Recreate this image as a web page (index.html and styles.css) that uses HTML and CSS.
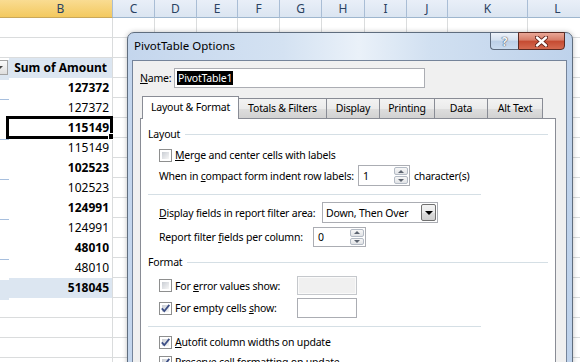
FILE: index.html
```html
<!DOCTYPE html>
<html lang="en">
<head>
    <meta charset="UTF-8">
    <meta name="viewport" content="width=device-width, initial-scale=1.0">
    <title>PivotTable Options</title>
    <link rel="stylesheet" href="styles.css">
</head>
<body>
    <!-- Worksheet behind the dialog -->
    <div class="sheet">
        <div class="col col-a">
            <div class="ch ch-active"></div>
            <div class="cell"></div>
            <div class="cell"></div>
            <div class="cell pv pv-head"><span class="filter-btn"></span></div>
            <div class="cell pv group"></div>
            <div class="cell pv"></div>
            <div class="cell pv group"></div>
            <div class="cell pv"></div>
            <div class="cell pv group"></div>
            <div class="cell pv"></div>
            <div class="cell pv group"></div>
            <div class="cell pv"></div>
            <div class="cell pv group"></div>
            <div class="cell pv"></div>
            <div class="cell pv pv-total"></div>
        </div>
        <div class="col col-b">
            <div class="ch ch-active">B</div>
            <div class="cell"></div>
            <div class="cell"></div>
            <div class="cell pv pv-head">Sum of Amount</div>
            <div class="cell pv strong">127372</div>
            <div class="cell pv">127372</div>
            <div class="cell pv strong">115149</div>
            <div class="cell pv">115149</div>
            <div class="cell pv strong">102523</div>
            <div class="cell pv">102523</div>
            <div class="cell pv strong">124991</div>
            <div class="cell pv">124991</div>
            <div class="cell pv strong">48010</div>
            <div class="cell pv">48010</div>
            <div class="cell pv pv-total">518045</div>
            <div class="sel-box"></div>
            <div class="fill-handle"></div>
        </div>
        <div class="col"><div class="ch">C</div></div>
        <div class="col"><div class="ch">D</div></div>
        <div class="col col-e"><div class="ch">E</div></div>
        <div class="col"><div class="ch">F</div></div>
        <div class="col"><div class="ch">G</div></div>
        <div class="col col-h"><div class="ch">H</div></div>
        <div class="col"><div class="ch">I</div></div>
        <div class="col col-j"><div class="ch">J</div></div>
        <div class="col col-k"><div class="ch">K</div></div>
        <div class="col col-l"><div class="ch">L</div></div>
    </div>

    <!-- PivotTable Options dialog -->
    <div class="dialog">
        <div class="titlebar">
            <span class="title">PivotTable Options</span>
            <div class="caption-btns">
                <span class="btn-help">?</span>
                <span class="btn-close">
                    <svg width="13" height="11" viewBox="0 0 13 11">
                        <path d="M2 1.5 L11 9.5 M11 1.5 L2 9.5" stroke="#5a1d14" stroke-width="4.2" stroke-linecap="round"/>
                        <path d="M2 1.5 L11 9.5 M11 1.5 L2 9.5" stroke="#ffffff" stroke-width="2.4" stroke-linecap="round"/>
                    </svg>
                </span>
            </div>
        </div>

        <div class="client">
            <div class="name-row">
                <span class="name-label"><u>N</u>ame:</span>
                <div class="textbox name-box"><span class="selected">PivotTable1</span></div>
            </div>

            <div class="tabs">
                <div class="tab active">Layout &amp; Format</div>
                <div class="tab tab-totals">Totals &amp; Filters</div>
                <div class="tab tab-display">Display</div>
                <div class="tab tab-printing">Printing</div>
                <div class="tab tab-data">Data</div>
                <div class="tab tab-alt">Alt Text</div>
            </div>

            <div class="panel">
                <div class="group-title">Layout</div>
                <div class="row check-row merge-row">
                    <span class="check"></span>
                    <span class="lbl"><u>M</u>erge and center cells with labels</span>
                </div>
                <div class="row compact-row">
                    <span class="lbl lbl-compact">When in <u>c</u>ompact form indent row labels:</span>
                    <div class="textbox spin spin-indent">
                        <span class="val">1</span>
                        <span class="spin-btns"><span class="up"></span><span class="down"></span></span>
                    </div>
                    <span class="unit">character(s)</span>
                </div>
                <div class="sep"></div>
                <div class="row select-row">
                    <span class="lbl lbl-display"><u>D</u>isplay fields in report filter area:</span>
                    <div class="textbox dropdown">
                        <span class="val">Down, Then Over</span>
                        <span class="drop-btn"></span>
                    </div>
                </div>
                <div class="row report-row">
                    <span class="lbl lbl-report">Report filter <u>f</u>ields per column:</span>
                    <div class="textbox spin spin-cols">
                        <span class="val">0</span>
                        <span class="spin-btns"><span class="up"></span><span class="down"></span></span>
                    </div>
                </div>

                <div class="group-title format-title">Format</div>
                <div class="row check-row error-row">
                    <span class="check"></span>
                    <span class="lbl fixed">For <u>e</u>rror values show:</span>
                    <div class="textbox small disabled"></div>
                </div>
                <div class="row check-row empty-row">
                    <span class="check checked"><svg width="9" height="9" viewBox="0 0 9 9"><path d="M0.8 4.3 L3.3 7.2 L8.3 0.9" fill="none" stroke="#3d4f86" stroke-width="1.8"/></svg></span>
                    <span class="lbl fixed">For empty cells <u>s</u>how:</span>
                    <div class="textbox small"></div>
                </div>
                <div class="sep"></div>
                <div class="row check-row autofit-row">
                    <span class="check checked"><svg width="9" height="9" viewBox="0 0 9 9"><path d="M0.8 4.3 L3.3 7.2 L8.3 0.9" fill="none" stroke="#3d4f86" stroke-width="1.8"/></svg></span>
                    <span class="lbl"><u>A</u>utofit column widths on update</span>
                </div>
                <div class="row check-row">
                    <span class="check checked"><svg width="9" height="9" viewBox="0 0 9 9"><path d="M0.8 4.3 L3.3 7.2 L8.3 0.9" fill="none" stroke="#3d4f86" stroke-width="1.8"/></svg></span>
                    <span class="lbl"><u>P</u>reserve cell formatting on update</span>
                </div>
            </div>
        </div>
    </div>
</body>
</html>
```

FILE: styles.css
```css
/* General */
* {
    margin: 0;
    padding: 0;
    box-sizing: border-box;
}

body {
    width: 580px;
    height: 362px;
    overflow: hidden;
    position: relative;
    background: #fff;
    font-family: 'Noto Sans', sans-serif;
}

/* Worksheet */
.sheet {
    display: flex;
    height: 362px;
}

.col {
    flex: none;
    position: relative;
    width: 42px;
    height: 100%;
    border-right: 1px solid #dadcdd;
    background: repeating-linear-gradient(to bottom, #fff 0 19px, #dadcdd 19px 20px);
    background-position: 0 18px;
}

.col-a { width: 9px; border-right: 0; }
.col-b { width: 104px; }
.col-e, .col-j { width: 41px; }
.col-h { width: 43px; }
.col-k { width: 80px; }
.col-l { width: 60px; }

.ch {
    height: 18px;
    margin-right: -1px;
    border-right: 1px solid #a9bdd5;
    border-bottom: 1px solid #9eb6ce;
    background: linear-gradient(#e9eff8, #dbe5f1);
    color: #2a4262;
    font-size: 12px;
    line-height: 17px;
    text-align: center;
}

.ch-active {
    background: linear-gradient(#f9dc92, #f3c95f);
    border-bottom-color: #c9a85a;
}

.col-a .ch-active { border-right: 0; margin-right: 0; }

.cell {
    height: 20px;
    padding-right: 3px;
    font-size: 12px;
    line-height: 20px;
    text-align: right;
    color: #000;
}

.pv { background: #fff; }
.pv.strong { font-weight: bold; }
.pv.group { border-bottom: 1px solid #a7bfde; }

.pv-head,
.pv-total {
    background: #dce6f1;
    font-weight: bold;
}

.pv-head { padding-right: 5px; }

.filter-btn {
    display: block;
    width: 15px;
    height: 15px;
    margin: 2px 0 0 -7px;
    border: 1px solid #a3a3a3;
    background: linear-gradient(#fbfbfb, #dedede);
    position: relative;
}

.filter-btn::after {
    content: '';
    position: absolute;
    left: 3px;
    top: 5px;
    border-left: 3px solid transparent;
    border-right: 3px solid transparent;
    border-top: 3px solid #444;
}

.sel-box {
    position: absolute;
    left: -3px;
    top: 116px;
    width: 107px;
    height: 23px;
    border: 3px solid #000;
}

.fill-handle {
    position: absolute;
    left: 99px;
    top: 133px;
    width: 7px;
    height: 7px;
    background: #000;
    border: 1px solid #fff;
}

/* Dialog window */
.dialog {
    position: absolute;
    left: 127px;
    top: 32px;
    width: 446px;
    height: 345px;
    display: flex;
    flex-direction: column;
    padding: 0 5px 0 4px;
    border: 1px solid #5f6d7e;
    border-radius: 7px 7px 0 0;
    background: linear-gradient(90deg, #c4d6ed 0%, #d4e2f2 35%, #eaf1f9 52%, #d1e0f1 68%, #bed2eb 100%);
    box-shadow: 0 0 5px rgba(0, 0, 0, 0.25);
    font-size: 10.5px;
    letter-spacing: -0.2px;
    color: #000;
}

.titlebar {
    flex: none;
    height: 27px;
    display: flex;
    align-items: flex-start;
}

.title {
    padding: 5px 0 0 2px;
    font-size: 11.5px;
    line-height: 16px;
    letter-spacing: 0;
}

.caption-btns {
    display: flex;
    margin: -1px 2px 0 auto;
}

.btn-help {
    width: 28px;
    height: 18px;
    border: 1px solid #5e6b7d;
    border-right: 0;
    border-radius: 0 0 0 4px;
    background: linear-gradient(#edf2f9, #d5e1ef 45%, #bccfe6 50%, #cbdcef);
    display: flex;
    align-items: center;
    justify-content: center;
    font-size: 12px;
    font-weight: bold;
    color: #f4f7fb;
    text-shadow: 0 0 1px #2d3a4c, 0 0 1px #2d3a4c;
}

.btn-close {
    width: 47px;
    height: 18px;
    border: 1px solid #5b2a22;
    border-radius: 0 0 4px 0;
    background: linear-gradient(#e9a797, #d67c67 45%, #c44a31 50%, #d46a50);
    display: flex;
    align-items: center;
    justify-content: center;
}

.client {
    flex: 1;
    display: flex;
    flex-direction: column;
    background: #f0f0f0;
    border: 1px solid #75849a;
    border-bottom: 0;
    padding-top: 7px;
}

.name-row {
    display: flex;
    align-items: center;
    height: 20px;
    padding-left: 7px;
}

.name-label { width: 34px; }

.textbox {
    height: 20px;
    border: 1px solid #abadb3;
    background: #fff;
    display: flex;
    align-items: center;
}

.name-box {
    width: 251px;
    padding-left: 2px;
}

.selected {
    background: #000;
    color: #fff;
    line-height: 14px;
    padding: 0 1px;
}

/* Tabs */
.tabs {
    display: flex;
    align-items: flex-end;
    height: 22px;
    margin-top: 8px;
    padding-left: 9px;
}

.tab {
    height: 20px;
    border: 1px solid #898c95;
    border-left: 0;
    border-bottom: 0;
    background: linear-gradient(#f3f3f3, #ebebeb 50%, #dedede 51%, #d2d2d2);
    line-height: 19px;
    text-align: center;
}

.tab.active {
    position: relative;
    width: 97px;
    height: 23px;
    margin-bottom: -1px;
    border-left: 1px solid #898c95;
    background: #fff;
    line-height: 21px;
}

.tab-totals { width: 88px; }
.tab-display { width: 53px; }
.tab-printing { width: 55px; }
.tab-data { width: 53px; }
.tab-alt { width: 55px; }

.panel {
    flex: 1;
    width: 416px;
    margin-left: 7px;
    padding: 7px 7px 0;
    background: #fff;
    border: 1px solid #898c95;
}

/* Panel rows */
.group-title {
    height: 16px;
    display: flex;
    align-items: center;
}

.group-title::after {
    content: '';
    flex: 1;
    height: 1px;
    margin-left: 5px;
    background: #d5dfe5;
}

.format-title { margin-top: 7px; }

.sep {
    width: 333px;
    height: 1px;
    margin-top: 8px;
    background: #d5dfe5;
}

.row {
    display: flex;
    align-items: center;
    height: 20px;
    padding-left: 11px;
}

.merge-row { margin-top: 3px; }
.compact-row { height: 21px; }
.select-row { height: 21px; margin-top: 7px; }
.report-row { margin-top: 4px; }
.error-row { height: 19px; margin-top: 6px; }
.empty-row { margin-top: 3px; }
.autofit-row { margin-top: 5px; }

.lbl { white-space: nowrap; }
.lbl-compact { width: 195px; }
.lbl-display { width: 160px; }
.lbl-report { width: 150px; }

.check {
    flex: none;
    width: 13px;
    height: 13px;
    padding: 2px;
    border: 1px solid #8e8f8f;
    background: linear-gradient(135deg, #c9cdd3, #f7f7f7) content-box, #fff;
    display: flex;
}

.check svg { margin: -1px; overflow: visible; }

.check-row .lbl { margin-left: 3px; }
.lbl.fixed { width: 122px; }

.spin {
    justify-content: space-between;
    padding-left: 4px;
    margin-left: 4px;
}

.spin-indent { width: 52px; height: 21px; }
.spin-cols { width: 53px; }

.spin-btns {
    display: flex;
    flex-direction: column;
    gap: 1px;
    width: 15px;
    height: 100%;
    padding: 1px 1px 1px 0;
}

.spin-btns span {
    flex: 1;
    border: 1px solid #b3bac4;
    border-radius: 2px;
    background: linear-gradient(#f7f7f7, #e1e3e6);
    display: flex;
    align-items: center;
    justify-content: center;
}

.spin-btns .up::after {
    content: '';
    border-left: 3px solid transparent;
    border-right: 3px solid transparent;
    border-bottom: 3px solid #5c6470;
}

.spin-btns .down::after {
    content: '';
    border-left: 3px solid transparent;
    border-right: 3px solid transparent;
    border-top: 3px solid #5c6470;
}

.unit { margin-left: 4px; }

.dropdown {
    width: 116px;
    height: 21px;
    margin-left: 3px;
    padding: 0 1px 0 3px;
    justify-content: space-between;
}

.drop-btn {
    width: 15px;
    height: 17px;
    border: 1px solid #707070;
    border-radius: 2px;
    background: linear-gradient(#f3f3f3, #ebebeb 50%, #dddddd 51%, #cfcfcf);
    display: flex;
    align-items: center;
    justify-content: center;
}

.drop-btn::after {
    content: '';
    border-left: 4px solid transparent;
    border-right: 4px solid transparent;
    border-top: 4px solid #000;
}

.textbox.small { width: 60px; }
.error-row .textbox { height: 19px; }

.textbox.disabled {
    background: #f0f0f0;
    border-color: #c5c8cc;
    box-shadow: inset 0 0 0 1px #fafafa;
}
```
